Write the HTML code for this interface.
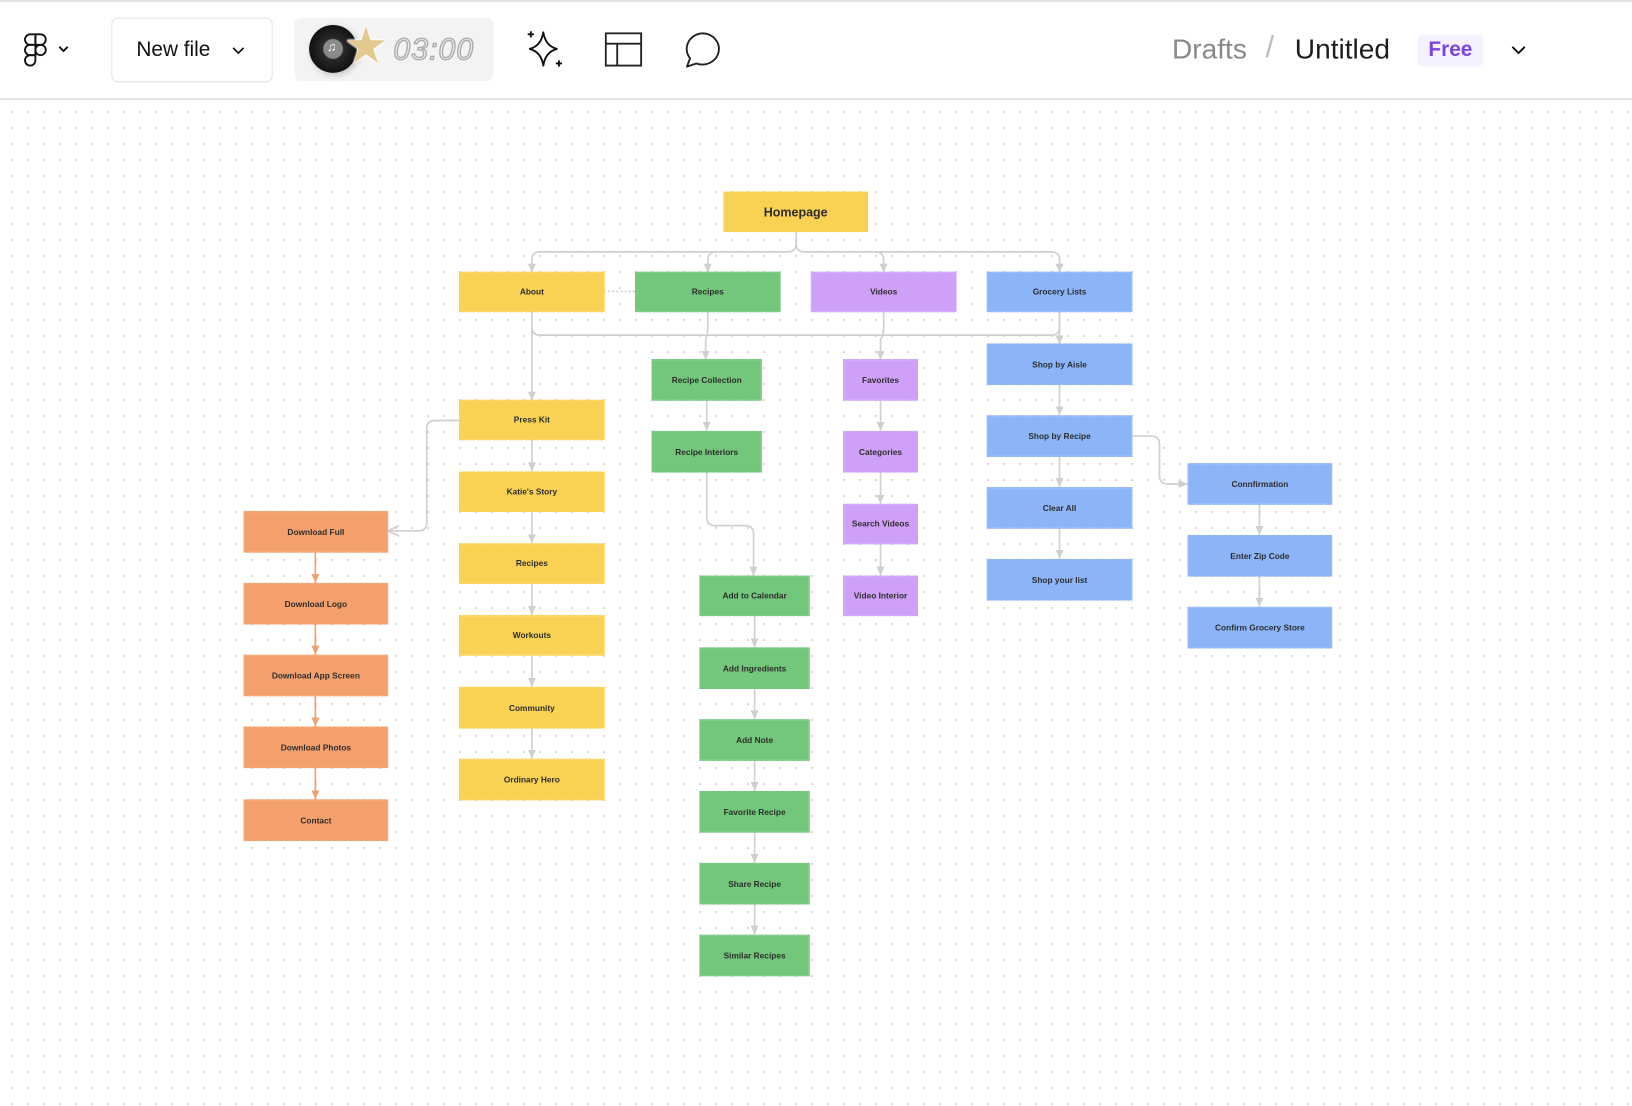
<!DOCTYPE html>
<html><head><meta charset="utf-8"><style>
html,body{margin:0;padding:0;width:1632px;height:1106px;overflow:hidden;background:#fff;font-family:"Liberation Sans",Arial,sans-serif}
#top{position:absolute;left:0;top:0;width:1632px;height:2px;background:#e3e3e3}
#hb{position:absolute;left:0;top:98px;width:1632px;height:2px;background:#e3e3e3}
#canvas{position:absolute;left:0;top:100px;width:1632px;height:1006px;
background-image:radial-gradient(circle,#d6d6d6 1.1px,transparent 1.3px);background-size:16px 16px;background-position:4px 4px}
#s{position:absolute;left:0;top:0;width:1568px;height:1063px;transform:scale(1.04082);transform-origin:0 0}
.b{position:absolute;display:flex;align-items:center;justify-content:center;font-weight:bold;font-size:8px;color:#2d2d2d;white-space:nowrap;outline:0.6px solid}
.y{background:#f9d253;outline-color:#f9d253}.g{background:#72c77a;outline-color:#72c77a}.p{background:#cfa0f8;outline-color:#cfa0f8}.u{background:#8cb4f8;outline-color:#8cb4f8}.o{background:#f4a06c;outline-color:#f4a06c}
</style></head><body>
<div id="top"></div>
<div id="hb"></div>
<div id="canvas"></div>
<div id="s">
<svg style="position:absolute;left:20px;top:30px" width="56" height="36" viewBox="0 0 56 36">
 <g fill="none" stroke="#111" stroke-width="1.8">
 <path d="M9 3h5v10h-5a5 5 0 0 1 0-10z"/><path d="M14 3h5a5 5 0 0 1 0 10h-5z"/>
 <path d="M9 13h5v10h-5a5 5 0 0 1 0-10z"/><circle cx="19" cy="18" r="5"/>
 <path d="M9 23h5v5a5 5 0 1 1-5-5z"/>
 <path d="M37 15l4 4 4-4"/></g></svg>
<div style="position:absolute;left:107px;top:17px;width:155px;height:62px;border:1.5px solid #e3e3e3;border-radius:6px;box-sizing:border-box;font-size:20px;color:#111;line-height:60px;padding-left:23px">New file
<svg style="position:absolute;left:115px;top:27px" width="12" height="8"><path d="M1 1l5 5 5-5" fill="none" stroke="#111" stroke-width="1.6"/></svg></div>
<div style="position:absolute;left:283px;top:17px;width:191px;height:61px;background:#f3f3f3;border-radius:6px;overflow:hidden">
 <div style="position:absolute;left:14px;top:7px;width:46px;height:46px;border-radius:50%;background:radial-gradient(circle,#8a8a8a 0 9px,#2a2a2a 10px,#111 23px);box-shadow:2px 2px 6px rgba(0,0,0,.2)"></div>
 <div style="position:absolute;left:31px;top:21px;color:#fff;font-size:12px">♫</div>
 <div style="position:absolute;left:47px;top:4px;color:#e2c98e;font-size:48px;line-height:48px;text-shadow:0 0 2px #fff,0 0 2px #fff,0 0 2px #fff">★</div>
 <div style="position:absolute;left:95px;top:15px;font-family:'Liberation Sans',sans-serif;font-size:29px;font-style:italic;color:#eee;-webkit-text-stroke:1.3px #aaa;letter-spacing:1px">03:00</div>
</div>
<svg style="position:absolute;left:502px;top:27px" width="42" height="42" viewBox="0 0 42 42"><g fill="none" stroke="#111" stroke-width="1.8" stroke-linejoin="round">
<path d="M20 4q2 13 13 16q-11 3-13 16q-2-13-13-16q11-3 13-16z"/><path d="M8 3v6M5 6h6M35 31v6M32 34h6"/></g></svg>
<svg style="position:absolute;left:581px;top:31px" width="37" height="34"><g fill="none" stroke="#222" stroke-width="1.8"><rect x="1" y="1" width="34" height="31"/><path d="M1 11h34M12 11v21"/></g></svg>
<svg style="position:absolute;left:656px;top:30px" width="38" height="36"><path d="M19 2a16 15 0 1 1-6 29l-9 3 3-8A16 15 0 0 1 19 2z" fill="none" stroke="#222" stroke-width="1.8" stroke-linejoin="round"/></svg>
<div style="position:absolute;left:1126px;top:32px;font-size:27px;color:#888">Drafts</div>
<div style="position:absolute;left:1216px;top:30px;font-size:29px;color:#bbb">/</div>
<div style="position:absolute;left:1244px;top:32px;font-size:27px;color:#1d1d1d">Untitled</div>
<div style="position:absolute;left:1362px;top:33px;width:63px;height:31px;background:#f5f1ff;border-radius:5px;color:#7b46e0;font-size:20px;font-weight:bold;text-align:center;line-height:31px">Free</div>
<svg style="position:absolute;left:1452px;top:44px" width="14" height="9"><path d="M1 1l6 6 6-6" fill="none" stroke="#111" stroke-width="1.8"/></svg>

<svg style="position:absolute;left:0;top:0" width="1568" height="1063">
<defs>
<marker id="a" viewBox="0 0 10 10" refX="9" refY="5" markerWidth="6" markerHeight="6" orient="auto"><path d="M0 1L9 5L0 9z" fill="#cfcfcf"/></marker>
<marker id="ao" viewBox="0 0 10 10" refX="9" refY="5" markerWidth="6" markerHeight="6" orient="auto"><path d="M0 1L9 5L0 9z" fill="#f4a06c"/></marker>
<marker id="al" viewBox="0 0 10 10" refX="9" refY="5" markerWidth="8" markerHeight="8" orient="auto"><path d="M1 1L9 5L1 9" fill="none" stroke="#cfcfcf" stroke-width="1.2"/></marker>
</defs>
<g fill="none" stroke="#d0d0d0" stroke-width="1.6">
<path d="M765 222v12q0 8-8 8H519q-8 0-8 8v12" marker-end="url(#a)"/>
<path d="M765 234q0 8 8 8h237q8 0 8 8v12" marker-end="url(#a)"/>
<path d="M688 242q-8 0-8 8v12" marker-end="url(#a)"/>
<path d="M841 242q8 0 8 8v12" marker-end="url(#a)"/>
<path d="M511 314q0 8 8 8h491q8 0 8-8v-15"/>
<path d="M680 299v15q0 8-2 12v20" marker-end="url(#a)"/>
<path d="M849 299v15q0 8-3 12v20" marker-end="url(#a)"/>
<path d="M1018 299v32" marker-end="url(#a)"/>
<path d="M511 299v86" marker-end="url(#a)"/>
<path d="M442 404h-24q-8 0-8 8v90q0 8-8 8h-29" marker-end="url(#al)"/>
<path d="M511 422v31" marker-end="url(#a)"/><path d="M511 491v31" marker-end="url(#a)"/><path d="M511 560v31" marker-end="url(#a)"/><path d="M511 629v31" marker-end="url(#a)"/><path d="M511 699v30" marker-end="url(#a)"/>
<path d="M679 384v30" marker-end="url(#a)"/>
<path d="M679 453v44q0 8 8 8h29q8 0 8 8v40" marker-end="url(#a)"/>
<path d="M725 591v31" marker-end="url(#a)"/><path d="M725 661v30" marker-end="url(#a)"/><path d="M725 730v30" marker-end="url(#a)"/><path d="M725 799v30" marker-end="url(#a)"/><path d="M725 868v30" marker-end="url(#a)"/>
<path d="M846 384v30" marker-end="url(#a)"/><path d="M846 453v31" marker-end="url(#a)"/><path d="M846 522v31" marker-end="url(#a)"/>
<path d="M1018 369v30" marker-end="url(#a)"/><path d="M1018 438v30" marker-end="url(#a)"/><path d="M1018 507v30" marker-end="url(#a)"/>
<path d="M1087 419h19q8 0 8 8v30q0 8 8 8h19" marker-end="url(#a)"/>
<path d="M1210 484v30" marker-end="url(#a)"/><path d="M1210 553v30" marker-end="url(#a)"/>
<path d="M580 280h31" stroke-dasharray="2 2"/>
</g>
<g fill="none" stroke="#f4a06c" stroke-width="1.6">
<path d="M303 530v30" marker-end="url(#ao)"/><path d="M303 599v30" marker-end="url(#ao)"/><path d="M303 668v30" marker-end="url(#ao)"/><path d="M303 737v31" marker-end="url(#ao)"/>
</g>
</svg>

<div class="b y" style="left:696px;top:185px;width:137px;height:37px;font-size:12px">Homepage</div>
<div class="b y" style="left:442px;top:262px;width:138px;height:37px">About</div>
<div class="b g" style="left:611px;top:262px;width:138px;height:37px">Recipes</div>
<div class="b p" style="left:780px;top:262px;width:138px;height:37px">Videos</div>
<div class="b u" style="left:949px;top:262px;width:138px;height:37px">Grocery Lists</div>

<div class="b g" style="left:627px;top:346px;width:104px;height:38px">Recipe Collection</div>
<div class="b g" style="left:627px;top:415px;width:104px;height:38px">Recipe Interiors</div>

<div class="b p" style="left:811px;top:346px;width:70px;height:38px">Favorites</div>
<div class="b p" style="left:811px;top:415px;width:70px;height:38px">Categories</div>
<div class="b p" style="left:811px;top:485px;width:70px;height:37px">Search Videos</div>
<div class="b p" style="left:811px;top:554px;width:70px;height:37px">Video Interior</div>

<div class="b u" style="left:949px;top:331px;width:138px;height:38px">Shop by Aisle</div>
<div class="b u" style="left:949px;top:400px;width:138px;height:38px">Shop by Recipe</div>
<div class="b u" style="left:949px;top:469px;width:138px;height:38px">Clear All</div>
<div class="b u" style="left:949px;top:538px;width:138px;height:38px">Shop your list</div>

<div class="b u" style="left:1142px;top:446px;width:137px;height:38px">Connfirmation</div>
<div class="b u" style="left:1142px;top:515px;width:137px;height:38px">Enter Zip Code</div>
<div class="b u" style="left:1142px;top:584px;width:137px;height:38px">Confirm Grocery Store</div>

<div class="b y" style="left:442px;top:385px;width:138px;height:37px">Press Kit</div>
<div class="b y" style="left:442px;top:454px;width:138px;height:37px">Katie's Story</div>
<div class="b y" style="left:442px;top:523px;width:138px;height:37px">Recipes</div>
<div class="b y" style="left:442px;top:592px;width:138px;height:37px">Workouts</div>
<div class="b y" style="left:442px;top:661px;width:138px;height:38px">Community</div>
<div class="b y" style="left:442px;top:730px;width:138px;height:38px">Ordinary Hero</div>

<div class="b o" style="left:235px;top:492px;width:137px;height:38px">Download Full</div>
<div class="b o" style="left:235px;top:561px;width:137px;height:38px">Download Logo</div>
<div class="b o" style="left:235px;top:630px;width:137px;height:38px">Download App Screen</div>
<div class="b o" style="left:235px;top:699px;width:137px;height:38px">Download Photos</div>
<div class="b o" style="left:235px;top:769px;width:137px;height:38px">Contact</div>

<div class="b g" style="left:673px;top:554px;width:104px;height:37px">Add to Calendar</div>
<div class="b g" style="left:673px;top:623px;width:104px;height:38px">Add Ingredients</div>
<div class="b g" style="left:673px;top:692px;width:104px;height:38px">Add Note</div>
<div class="b g" style="left:673px;top:761px;width:104px;height:38px">Favorite Recipe</div>
<div class="b g" style="left:673px;top:830px;width:104px;height:38px">Share Recipe</div>
<div class="b g" style="left:673px;top:899px;width:104px;height:38px">Similar Recipes</div>
</div>
</body></html>
